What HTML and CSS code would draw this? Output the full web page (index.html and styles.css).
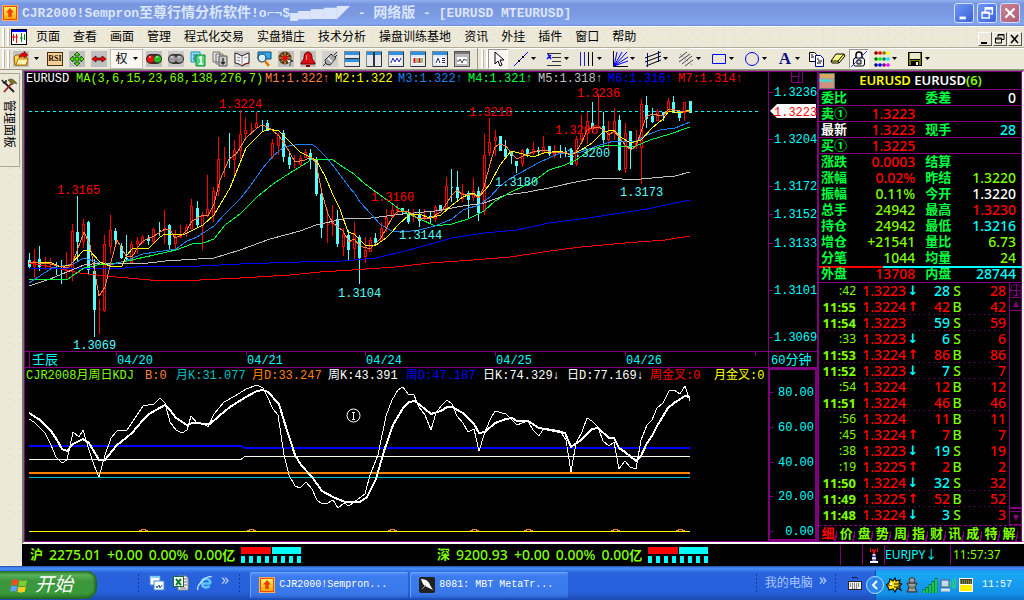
FILE: index.html
```html
<!DOCTYPE html>
<html lang="zh-CN">
<head>
<meta charset="utf-8">
<title>CJR2000!Sempron</title>
<link rel="stylesheet" href="styles.css">
</head>
<body>
<svg class="defs" aria-hidden="true">
  <defs>
    <linearGradient id="gold" x1="0" y1="0" x2="0" y2="1"><stop offset="0" stop-color="#fff36a"/><stop offset="1" stop-color="#f9a800"/></linearGradient>
    <symbol id="app" viewBox="0 0 16 16"><rect x=".5" y=".5" width="15" height="15" fill="#f04800" stroke="#ffb060"/><rect x="2" y="2" width="12" height="12" fill="url(#gold)"/><path d="M8 3l4 4.500h-2.200v4.500h-3.600v-4.500H4z" fill="#f04000"/></symbol>
    <symbol id="caret" viewBox="0 0 5 3"><path d="M0 0h5L2.500 3z" fill="#000"/></symbol>
    <symbol id="win" viewBox="0 0 16 16"><rect x=".5" y=".5" width="15" height="15" fill="#e4e8ec" stroke="#7a8790"/><path d="M1 1h14v3H1z" fill="#2f8fe0"/><path d="M15.500 1v14.500H1" fill="none" stroke="#333"/></symbol>
  </defs>
</svg>

<header class="titlebar">
  <svg class="i16" viewBox="0 0 16 16"><use href="#app"/></svg>
  <h1>CJR2000!Sempron<span class="han">至尊行情分析软件</span>!o⌐¬$▄▅▆▇◤ - <span class="han">网络版</span> - [EURUSD MTEURUSD]</h1>
  <div class="winbtns">
    <button aria-label="最小化"><svg viewBox="0 0 20 20"><path d="M5 14h7v3H5z" fill="#fff"/></svg></button>
    <button aria-label="还原"><svg viewBox="0 0 20 20"><path d="M8 9V4h8v7h-3M8 5.500h8M4.500 9h8v6.500h-8zM4 10h9" fill="none" stroke="#fff" stroke-width="1.500"/></svg></button>
    <button class="close" aria-label="关闭"><svg viewBox="0 0 20 20"><path d="M5 5l10 10M15 5L5 15" stroke="#fff" stroke-width="2.400"/></svg></button>
  </div>
</header>

<nav class="menubar">
  <span class="grip"></span>
  <svg class="i16" viewBox="0 0 16 16"><rect x=".5" y=".5" width="15" height="15" fill="#fff" stroke="#000"/><path d="M1 1h14v2H1z" fill="#00f"/><path d="M2.500 5v7M1 8h3M5.500 5v9M4 8h3" stroke="#f00"/><path d="M10.500 4v9M9 9h3M13.500 5v6" stroke="#080"/></svg>
  <button>页面</button><button>查看</button><button>画面</button><button>管理</button><button>程式化交易</button><button>实盘猎庄</button><button>技术分析</button><button>操盘训练基地</button><button>资讯</button><button>外挂</button><button>插件</button><button>窗口</button><button>帮助</button>
  <div class="mdibtns">
    <button aria-label="最小化窗口"><svg viewBox="0 0 12 12"><path d="M2 9h6v2H2z"/></svg></button>
    <button aria-label="还原窗口"><svg viewBox="0 0 12 12"><path d="M4 4V1.500h6v5H8M4 2h6M1.500 5h6v5h-6zM2 6h6" fill="none" stroke="#000"/></svg></button>
    <button aria-label="关闭窗口"><svg viewBox="0 0 12 12"><path d="M2 2l7 8M9 2l-7 8" stroke="#000" stroke-width="1.500"/></svg></button>
  </div>
</nav>

<div class="toolbar">
  <span class="grip"></span>
  <button class="dd first" aria-label="打开"><svg class="i16" viewBox="0 0 16 16"><path fill="#c0c0c0" d="M0 0h16v16H0z"/><path d="M1 6l2-2h4l1 2h6v8H2z" fill="#ffd75a" stroke="#9a6200"/><path d="M3 14l2-6h10l-2 6z" fill="#fff3b0" stroke="#b87800"/><path d="M6 7c0-4 3-5 5-5V0l4 4-4 3V5c-2 0-4 1-5 2" fill="#e00000" stroke="#700"  stroke-width=".5"/></svg><svg class="car"><use href="#caret"/></svg></button>
  <button class="tb rsi"><span>RSI</span></button>
  <button class="tb" aria-label="移动"><svg class="i16" viewBox="0 0 16 16"><path fill="#c0c0c0" d="M0 0h16v16H0z"/><path d="M8 1l3 3H9v3h3V5l3 3-3 3V9H9v3h2l-3 3-3-3h2V9H4v2L1 8l3-3v2h3V4H5z" fill="#58e000" stroke="#064006" stroke-width=".8"/></svg></button>
  <button class="tb" aria-label="水平移动"><svg class="i16" viewBox="0 0 16 16"><path fill="#c0c0c0" d="M0 0h16v16H0z"/><path d="M1 8l4-3v2h6V5l4 3-4 3V9H5v2z" fill="#f00" stroke="#500" stroke-width=".8"/></svg></button>
  <button class="quan">权<svg class="car"><use href="#caret"/></svg></button>
  <button class="tb" aria-label="信号"><svg class="i16" viewBox="0 0 16 16"><path fill="#c0c0c0" d="M0 0h16v16H0z"/><rect y="3" width="16" height="10" rx="5" fill="#402828"/><circle cx="4.500" cy="8" r="3.500" fill="#f01010"/><circle cx="11.500" cy="8" r="3.500" fill="#20c020"/><path d="M3 6h2M10 6h2" stroke="#fff"/></svg></button>
  <button class="tb" aria-label="信号关闭"><svg class="i16" viewBox="0 0 16 16"><path fill="#c8c8c8" d="M0 0h16v16H0z"/><rect y="3" width="16" height="10" rx="5" fill="#333"/><circle cx="4.500" cy="8" r="3.500" fill="#999"/><circle cx="11.500" cy="8" r="3.500" fill="#999"/><path d="M3 6h2M10 6h2" stroke="#fff"/></svg></button>
  <button class="tb" aria-label="分页"><svg class="i16" viewBox="0 0 16 16"><path d="M1 1h9v10H1z" fill="#8ee4f4" stroke="#1593c0"/><path d="M3 4h4v2H4v3h3" fill="none" stroke="#157"/><path d="M6 4h9v11H6z" fill="#50d878" stroke="#0c8838"/><path d="M9 7l2-1v7M9 13h4" fill="none" stroke="#fff" stroke-width="1.500"/></svg></button>
  <button class="tb" aria-label="下一页"><svg class="i16" viewBox="0 0 16 16"><path d="M1 1h7v10H1zM4 3h7v10H4z" fill="#ddd" stroke="#777"/><path d="M7 5h8v10H7z" fill="#c8c8c8" stroke="#555"/><path d="M11 7v6M9 11l2 2 2-2" fill="none" stroke="#222" stroke-width="1.300"/></svg></button>
  <button class="tb" aria-label="帮助手册"><svg class="i16" viewBox="0 0 16 16"><path fill="#c8c8c8" d="M0 0h16v16H0z"/><path d="M1 2l3 1 4 2 4-2 3-1v10l-4 1-3 2-3-2-4-1z" fill="#f4f4f4" stroke="#222"/><path d="M8 5v10M3 6l3 1M3 9l3 1M10 7l3-1" stroke="#888"/><path d="M8 15l3-2 4-1" stroke="#a00" fill="none"/></svg></button>
  <button class="tb" aria-label="查找"><svg class="i16" viewBox="0 0 16 16"><path d="M2 1h13v7H2z" fill="#36a9ee" stroke="#0b4b80"/><circle cx="6" cy="7" r="4" fill="#d5f2ff" stroke="#246" stroke-width="1.200"/><path d="M9 10l4 5" stroke="#e07000" stroke-width="2.500"/></svg></button>
  <button class="tb" aria-label="设置"><svg class="i16" viewBox="0 0 16 16"><path fill="#c0c0c0" d="M0 0h16v16H0z"/><circle cx="7" cy="7" r="6.500" fill="#5a3a18"/><path d="M7 1v12M1 7h12M3 3l8 8M11 3l-8 8" stroke="#d8a040"/><circle cx="7" cy="7" r="2.500" fill="#e00"/><path d="M9 8l6 2-3 1v4" fill="#fff" stroke="#333"/></svg></button>
  <button class="tb" aria-label="预警"><svg class="i16" viewBox="0 0 16 16"><path fill="#c0c0c0" d="M0 0h16v16H0z"/><path d="M8 1c4 0 4 5 4 7l3 4v1H1v-1l3-4c0-2 0-7 4-7z" fill="#e01010" stroke="#600"/><path d="M6 14h4v2H6z" fill="#800"/><path d="M6.500 4v5" stroke="#ff9090"/></svg></button>
  <button class="tb" aria-label="连接"><svg class="i16" viewBox="0 0 16 16"><path fill="#d0d0d0" d="M0 0h16v16H0z"/><path d="M1 15l3-3M12 4l3-3M13 6l2-2" stroke="#333"/><path d="M3 9l6-6 5 4-6 7-4-1z" fill="#aaa" stroke="#333"/><path d="M6 7l4 4" stroke="#fff" stroke-width="1.500"/></svg></button>
  <button class="tb" aria-label="横向排列"><svg class="i16" viewBox="0 0 16 16"><use href="#win"/><path d="M1 8h14v3H1z" fill="#2f8fe0"/><path d="M1 7.500h14" stroke="#333"/></svg></button>
  <button class="tb" aria-label="纵向排列"><svg class="i16" viewBox="0 0 16 16"><use href="#win"/><path d="M7 1h2v14H7z" fill="#333"/></svg></button>
  <button class="tb" aria-label="走势"><svg class="i16" viewBox="0 0 16 16"><use href="#win"/><path d="M3 6h10v7H3z" fill="#fff"/><path d="M3 12l2-5 2 4 2-4 2 4 2-4" fill="none" stroke="#22a"/></svg></button>
  <button class="tb" aria-label="K线"><svg class="i16" viewBox="0 0 16 16"><use href="#win"/><path d="M3 6h10v7H3z" fill="#fff"/><path d="M4.500 7v5M9.500 7v5" stroke="#e00" stroke-width="2"/><path d="M7 7v5M12 7v5" stroke="#080"/></svg></button>
  <button class="tb" aria-label="报表"><svg class="i16" viewBox="0 0 16 16"><use href="#win"/><path d="M3 6h10v7H3z" fill="#fff"/><path d="M4 12l2-5 2 5M10 7.500h3M10 9.500h3M10 11.500h3" fill="none" stroke="#226"/></svg></button>
  <button class="tb" aria-label="图形"><svg class="i16" viewBox="0 0 16 16"><rect x=".5" y=".5" width="15" height="15" fill="#bbb" stroke="#555"/><path d="M1 1h14v2H1z" fill="#777"/><path d="M3 6h10v7H3z" fill="#fff"/><path d="M3 10h2l1-2 2 4 2-4 1 1h2" fill="none" stroke="#444"/></svg></button>
  <span class="sep"></span><span class="grip"></span>
  <button class="press" aria-label="选择"><svg class="i16" viewBox="0 0 16 16"><path d="M5 1v12l3-3 2 5 2-1-2-5h4z" fill="#fff" stroke="#000"/></svg></button>
  <button class="dd" aria-label="直线"><svg class="i16" viewBox="0 0 16 16"><path d="M1 15L15 1" stroke="#00f"/><path d="M5 9h2v2H5zM9 5h2v2H9z" fill="#000"/></svg><svg class="car"><use href="#caret"/></svg></button>
  <button class="dd" aria-label="分割线"><svg class="i16" viewBox="0 0 16 16"><path d="M1 2.500h14M6 6.500h9M6 10.500h9M1 14.500h14" stroke="#333"/><path d="M2 3l3 5M1 8l4-4" stroke="#00f" stroke-width="1.500"/></svg><svg class="car"><use href="#caret"/></svg></button>
  <button class="dd" aria-label="周期线"><svg class="i16" viewBox="0 0 16 16"><path d="M1.500 1v14M5.500 1v14" stroke="#22c"/><path d="M9.500 1v14M13.500 1v14" stroke="#000"/></svg><svg class="car"><use href="#caret"/></svg></button>
  <button class="dd" aria-label="扇形线"><svg class="i16" viewBox="0 0 16 16"><path d="M1.500 0v15.500H16" stroke="#000" fill="none"/><path d="M2 15L5 1M2 15L10 1M2 15L15 1M2 15l14-9M2 15l14-5" stroke="#00f"/></svg><svg class="car"><use href="#caret"/></svg></button>
  <button class="dd" aria-label="通道线"><svg class="i16" viewBox="0 0 16 16"><path d="M2.500 2v14M13.500 0v11" stroke="#00a"/><path d="M0 7l16-6M0 11l16-6M1 15l15-6" stroke="#000"/></svg><svg class="car"><use href="#caret"/></svg></button>
  <button class="dd" aria-label="平行线"><svg class="i16" viewBox="0 0 16 16"><path d="M1 7l8-6M1 11L12 3M4 13l10-8M7 15l8-6" stroke="#444"/><path d="M2 3l12 11" stroke="#88b" stroke-dasharray="2 1"/></svg><svg class="car"><use href="#caret"/></svg></button>
  <button class="dd" aria-label="矩形"><svg class="i16" viewBox="0 0 16 16"><path d="M1.500 3.500h13v9h-13z" fill="none" stroke="#00f"/></svg><svg class="car"><use href="#caret"/></svg></button>
  <button class="dd" aria-label="圆形"><svg class="i16" viewBox="0 0 16 16"><circle cx="8" cy="8" r="6.500" fill="none" stroke="#00f"/></svg><svg class="car"><use href="#caret"/></svg></button>
  <button class="dd letter"><span>A</span><svg class="car"><use href="#caret"/></svg></button>
  <button class="tb" aria-label="复制"><svg class="i16" viewBox="0 0 16 16"><path d="M1.500 1.500h5l2 2v7h-7z" fill="#fff" stroke="#000"/><path d="M7.500 4.500h5l3 3v8h-8z" fill="#fff" stroke="#008"/><path d="M3 4h2M3 6h3M9 8h2M10 10h4M9 12h4" stroke="#000"/></svg></button>
  <button class="tb" aria-label="橡皮"><svg class="i16" viewBox="0 0 16 16"><path d="M6 3h8l1 2-6 7H2l-1-2z" fill="#ffff80" stroke="#000"/><path d="M1 10h7l1 2M8 10l6-7" fill="none" stroke="#000"/></svg></button>
  <button class="press" aria-label="锁定"><svg class="i16" viewBox="0 0 16 16"><path d="M5 7V4c0-4 6-4 6 0v3" fill="none" stroke="#000" stroke-width="1.500"/><rect x="2.500" y="7" width="11" height="8" rx="2" fill="#fff" stroke="#000"/><path d="M6 9h4v4H6z" fill="#ccc" stroke="#000"/><path d="M0 16L16 0" stroke="#33c"/></svg></button>
  <button class="dd" aria-label="颜色"><svg class="i16" viewBox="0 0 16 16"><g stroke-width="3.600" stroke-linecap="round"><path d="M2 2h.1" stroke="#800000"/><path d="M6 2h.1" stroke="#f00"/><path d="M10 2h.1" stroke="#808000"/><path d="M14 2h.1" stroke="#ff0"/><path d="M2 8h.1" stroke="#008000"/><path d="M6 8h.1" stroke="#0e0"/><path d="M10 8h.1" stroke="#008080"/><path d="M14 8h.1" stroke="#0ee"/><path d="M2 14h.1" stroke="#000080"/><path d="M6 14h.1" stroke="#00f"/><path d="M10 14h.1" stroke="#800080"/><path d="M14 14h.1" stroke="#f0f"/></g></svg><svg class="car"><use href="#caret"/></svg></button>
  <button class="dd" aria-label="保存"><svg class="i16" viewBox="0 0 16 16"><path d="M1 1h14v14H1z" fill="#000"/><path d="M3 2h10v6H3z" fill="#e8e8d0"/><path d="M2 2v12h2v-4h8v4h2V2h-1v7H3V2z" fill="#808000"/><path d="M9 11h2v3H9z" fill="#fff"/></svg><svg class="car"><use href="#caret"/></svg></button>
</div>

<main class="main">
  <aside class="side"><button class="sidetab"><svg class="i16" viewBox="0 0 16 16"><path d="M3 4l10 10" stroke="#222" stroke-width="1.800"/><path d="M1 2l2 3 2-1V2" fill="none" stroke="#222" stroke-width="1.500"/><path d="M11 5L3 14" stroke="#a02020" stroke-width="1.800"/><path d="M7 2c3-2 6-1 9 4l-3-1-2 2-2-3z" fill="#7a7418" stroke="#333" stroke-width=".5"/></svg><span>管理面板</span></button></aside>
  <div class="desk">
    <div class="work">
      <section class="charts">
        <div class="legend ma"><span class="c-w">EURUSD</span><span class="c-lime">MA(3,6,15,23,68,138,276,7)</span><span class="c-or">M1:1.322↑</span><span class="c-y">M2:1.322</span><span class="c-bl">M3:1.322↑</span><span class="c-g">M4:1.321↑</span><span class="c-gr">M5:1.318↑</span><span class="c-db">M6:1.316↑</span><span class="c-r">M7:1.314↑</span></div>
        <div class="corner"><svg viewBox="0 0 14 12"><path d="M1.500 0v10.500h11V0M1 4.500h8V0M8.500 4v7" fill="none" stroke="#800080"/></svg></div>
        <svg class="plot" viewBox="25 87 743 264" preserveAspectRatio="xMinYMin meet">
          <path class="dash" d="M29 111.500H759"/>
          <g id="candles"></g>
          <g class="lines">
            <path stroke="#f00" d="M29 263L51 267 80 273 105 276 150 280 200 280 240 278 290 275 320 272 352 270 395 267 430 263 473 260 510 257 550 251 581 247 625 243 665 240 690 236"/>
            <path stroke="#00f" d="M29 268H125L146 266 200 266 240 264 300 262 343 261 376 258 409 250 452 238 484 233 517 230 549 223 581 219 614 214 647 209 675 203 690 200"/>
            <path stroke="#c0c0c0" d="M29 286L50 279 84 265 100 263 140 264 165 261 214 258 240 250 270 239 300 231 316 225 343 219 371 218 403 214 435 211 463 206 484 203 506 195 528 192 549 188 571 183 592 179 614 178 630 180 652 178 675 176 690 172"/>
            <path stroke="#00ff40" d="M29 280L68 279 75 274 84 268 97 265 110 264 127 261 154 255 176 250 192 244 203 243 214 239 225 225 240 214 257 197 273 184 290 173 311 160 322 159 333 160 343 167 354 174 365 184 376 192 387 200 398 208 409 214 420 219 435 226 452 224 468 219 484 211 495 201 511 192 533 182 549 170 565 165 576 160 592 149 603 146 614 145 625 147 636 146 650 140 670 134 690 127"/>
            <path stroke="#1e80f0" d="M29 283L52 268 73 264 84 258 97 262 110 265 125 261 143 254 176 249 187 241 197 237 214 226 225 214 240 199 251 185 262 169 273 156 284 147 300 144 311 144 316 147 327 158 338 172 349 187 355 194 360 202 371 214 381 225 392 231 403 232 419 230 435 226 452 219 463 210 479 205 490 197 500 186 511 178 520 173 540 162 560 153 571 153 581 152 600 145 614 141 625 142 636 141 647 135 660 130 675 128 690 122"/>
            <path stroke="#ff0" d="M29 262L52 263 60 267 70 265 84 250 90 251 100 262 110 266 122 266 127 255 133 248 149 248 160 237 165 234 185 234 203 225 214 215 230 188 246 148 262 132 268 129 279 131 300 152 316 160 325 176 333 195 340 209 348 232 354 234 360 240 365 245 376 245 386 238 392 232 398 225 409 215 419 214 430 218 441 215 452 205 463 197 473 193 479 197 490 184 500 165 511 151 523 154 533 157 544 153 560 151 571 155 581 150 592 143 603 132 614 130 620 137 631 143 641 140 652 128 663 119 669 111 679 113 690 110"/>
            <path stroke="#ff8040" d="M29 262L50 264 68 268 73 262 84 232 90 245 99 296 105 287 111 262 117 240 126 256 132 257 138 247 143 241 154 236 165 229 170 230 175 238 182 235 187 230 192 221 203 215 208 216 214 204 220 180 229 159 236 154 240 148 246 138 257 128 262 125 268 127 278 135 285 144 295 162 305 160 311 157 316 163 322 193 328 214 333 223 343 231 349 242 354 239 360 246 370 249 381 238 392 218 398 211 409 212 419 219 430 218 441 212 452 195 457 190 463 195 473 194 479 198 484 187 490 164 495 147 500 144 506 146 511 153 517 159 523 156 533 152 544 150 555 153 565 152 571 155 576 152 582 142 587 130 592 128 598 127 603 129 609 135 614 131 620 138 625 145 631 150 636 146 641 132 646 117 652 114 663 116 669 109 680 111 690 111"/>
          </g>
          <g class="num" fill="#f00"><text x="57" y="194">1.3165</text><text x="219" y="108">1.3224</text><text x="371" y="201">1.3160</text><text x="469" y="116">1.3218</text><text x="577" y="97">1.3236</text><text x="555" y="134">1.3206</text></g>
          <g class="num" fill="#5ff"><text x="73" y="349">1.3069</text><text x="338" y="297">1.3104</text><text x="399" y="239">1.3144</text><text x="495" y="186">1.3180</text><text x="567" y="157">1.3200</text><text x="620" y="196">1.3173</text></g>
        </svg>
        <svg class="axis" viewBox="769 87 48 264" preserveAspectRatio="xMinYMin meet">
          <path d="M769 92.500h4M769 139.500h4M769 186.500h4M769 214.500h4M769 243.500h4M769 290.500h4M769 337.500h4" stroke="#800080"/>
          <g class="num" fill="#0ff"><text x="774" y="96">1.3236</text><text x="774" y="143">1.3204</text><text x="774" y="190">1.3172</text><text x="774" y="218">1.3152</text><text x="774" y="247">1.3133</text><text x="774" y="294">1.3101</text><text x="774" y="341">1.3069</text></g>
          <path d="M770 111l7-7h39v14h-39z" fill="#fff"/><text class="num" x="774" y="116" fill="#f00">1.3223</text>
        </svg>
        <svg class="dates" viewBox="25 352 743 15" preserveAspectRatio="xMinYMin meet">
          <path d="M29.500 352v15M116.500 352v4M246.500 352v4M273.500 352v4M365.500 352v4M495.500 352v4M625.500 352v4M755.500 352v4" stroke="#800080"/>
          <g class="num" fill="#0ff"><text class="han13" x="32" y="364">壬辰</text><text x="117" y="364">04/20</text><text x="247" y="364">04/21</text><text x="366" y="364">04/24</text><text x="496" y="364">04/25</text><text x="626" y="364">04/26</text></g>
        </svg>
        <div class="period">60<span>分钟</span></div>
        <div class="legend kdj"><span class="c-lime">CJR2008月周日KDJ</span><span class="c-or">B:0</span><span class="c-te">月K:31.077</span><span class="c-o2">月D:33.247</span><span class="c-w">周K:43.391</span><span class="c-db">周D:47.187</span><span class="c-w">日K:74.329↓</span><span class="c-w">日D:77.169↓</span><span class="c-r">周金叉:0</span><span class="c-y">月金叉:0</span></div>
        <svg class="plot2" viewBox="25 384 743 157" preserveAspectRatio="xMinYMin meet">
          <g fill="none">
            <path d="M29 446H241L245 448H690" stroke="#00f" stroke-width="2"/>
            <path d="M29 459.500H241L245 456.500H690" stroke="#f0ffe8"/>
            <path d="M29 473H690" stroke="#ff8000" stroke-width="2"/>
            <path d="M29 477.500H690" stroke="#00c0c0"/>
            <path d="M29 531.500H690" stroke="#ff0"/>
            <path d="M139 530.500h2l1-1h3l1 1h2M247 530.500h2l1-1h3l1 1h2M388 530.500h2l1-1h3l1 1h2M470 530.500h2l1-1h3l1 1h2M524 530.500h2l1-1h3l1 1h2M611 530.500h2l1-1h3l1 1h2M676 530.500h2l1-1h3l1 1h2" stroke="#ff8040"/>
            <path d="M29 419L34 422 45 433 51 445 56 457 62 463 67 460 73 432 79 437 83 430 89 450 94 465 99 477 105 455 111 438 117 431 127 430 143 406 154 404 160 398 165 403 170 422 176 430 182 433 187 430 191 416 197 423 203 423 208 427 214 414 224 402 235 396 246 389 257 385 263 388 268 398 273 409 278 415 284 455 289 475 295 486 300 488 306 482 312 489 317 500 322 504 328 503 333 500 338 508 344 503 349 506 365 494 370 475 378 455 386 416 392 400 398 390 403 387 408 394 414 395 419 407 425 415 431 430 436 413 441 406 447 400 452 404 457 416 463 423 468 432 474 429 479 451 485 432 490 420 495 411 506 414 517 425 522 423 528 421 533 430 539 436 544 428 560 431 566 440 571 472 576 443 582 432 587 418 592 421 598 427 603 441 609 446 614 442 619 469 625 461 630 467 636 469 641 440 647 425 652 420 657 408 663 403 669 391 674 390 680 394 685 386 690 401" stroke="#fff"/>
            <path d="M29 413L40 420 51 431 57 440 62 449 67 451 73 444 83 439 89 443 99 460 105 460 116 446 132 433 143 420 149 414 165 405 170 410 176 418 187 425 192 423 210 424 219 416 230 407 246 397 257 391 263 390 268 392 279 404 285 424 295 455 301 465 312 477 322 491 333 497 345 502 360 502 367 497 376 479 384 451 393 425 403 408 409 402 415 401 425 409 431 414 441 411 447 407 452 407 463 413 474 424 479 433 485 432 495 423 506 419 512 418 517 421 528 421 539 428 555 431 565 433 571 447 581 440 592 429 598 428 609 438 614 438 619 448 625 452 636 461 641 456 647 443 652 436 657 426 668 408 674 403 685 396 690 397" stroke="#fff" stroke-width="2"/>
            <circle cx="353.500" cy="415.500" r="6.500" stroke="#fff"/><path d="M353.500 412v7M352 412.500h3M352 419.500h3" stroke="#fff"/>
          </g>
        </svg>
        <svg class="axis2" viewBox="771 370 44 169" preserveAspectRatio="xMinYMin meet">
          <path d="M771 392.500h3M771 427.500h3M771 462.500h3M771 496.500h3M771 531.500h3" stroke="#800080"/>
          <g class="num" fill="#0ff" text-anchor="end"><text x="815" y="396">80.00</text><text x="815" y="431">60.00</text><text x="815" y="466">40.00</text><text x="815" y="500">20.00</text><text x="815" y="535">0.00</text></g>
        </svg>
      </section>

      <section class="quote">
        <div class="qhead"><svg class="i16" viewBox="0 0 16 16"><path fill="#d09080" stroke="#5a7a70" stroke-width="2" d="M0 0h16v16H0z"/><path d="M1 1h14v4H1z" fill="#d8a860"/><path d="M1 9V6l3 3V6M8 6H6v3h2M6 7.500h2M10 6v3l1.500-1.500L13 9V6" stroke="#0ff" fill="none"/></svg><h2><span class="c-y">EURUSD</span> EURUSD<span class="c-lime">(6)</span></h2></div>
        <table class="qt">
          <tr class="ln"><th>委比</th><td></td><th>委差</th><td class="c-w">0</td></tr>
          <tr class="ln"><th>卖①</th><td class="c-r">1.3223</td><th></th><td></td></tr>
          <tr class="ln"><th class="c-w">最新</th><td class="c-r">1.3223</td><th>现手</th><td class="c-cy">28</td></tr>
          <tr class="ln"><th>买①</th><td class="c-r">1.3225</td><th></th><td></td></tr>
          <tr><th>涨跌</th><td class="c-r">0.0003</td><th>结算</th><td></td></tr>
          <tr><th>涨幅</th><td class="c-r">0.02%</td><th>昨结</th><td>1.3220</td></tr>
          <tr><th>振幅</th><td>0.11%</td><th>今开</th><td class="c-w">1.3220</td></tr>
          <tr><th>总手</th><td>24942</td><th>最高</th><td class="c-r">1.3230</td></tr>
          <tr><th>持仓</th><td>24942</td><th>最低</th><td class="c-cy">1.3216</td></tr>
          <tr><th>增仓</th><td>+21541</td><th>量比</th><td>6.73</td></tr>
          <tr><th>分笔</th><td>1044</td><th>均量</th><td>24</td></tr>
          <tr class="ratio"><th>外盘</th><td class="c-r">13708</td><th>内盘</th><td class="c-cy">28744</td></tr>
        </table>
        <div class="ticks">
          <table class="tt">
            <tr><th>:42</th><td>1.3223</td><td class="c-cy">↓</td><td class="c-cy">28</td><td>S</td><td>28</td></tr>
            <tr class="m"><th>11:55</th><td>1.3224</td><td>↑</td><td>42</td><td>B</td><td>42</td></tr>
            <tr class="m"><th>11:54</th><td>1.3223</td><td></td><td class="c-cy">59</td><td>S</td><td>59</td></tr>
            <tr><th>:33</th><td>1.3223</td><td class="c-cy">↓</td><td class="c-cy">6</td><td>S</td><td>6</td></tr>
            <tr class="m"><th>11:53</th><td>1.3224</td><td>↑</td><td>86</td><td>B</td><td>86</td></tr>
            <tr class="m"><th>11:52</th><td>1.3223</td><td class="c-cy">↓</td><td class="c-cy">7</td><td>S</td><td>7</td></tr>
            <tr><th>:54</th><td>1.3224</td><td></td><td>12</td><td>B</td><td>12</td></tr>
            <tr class="m"><th>11:51</th><td>1.3224</td><td></td><td>46</td><td>B</td><td>46</td></tr>
            <tr><th>:56</th><td>1.3224</td><td></td><td>11</td><td>B</td><td>11</td></tr>
            <tr><th>:45</th><td>1.3224</td><td>↑</td><td>7</td><td>B</td><td>7</td></tr>
            <tr><th>:38</th><td>1.3223</td><td class="c-cy">↓</td><td class="c-cy">19</td><td>S</td><td>19</td></tr>
            <tr><th>:19</th><td>1.3225</td><td>↑</td><td>2</td><td>B</td><td>2</td></tr>
            <tr class="m"><th>11:50</th><td>1.3224</td><td class="c-cy">↓</td><td class="c-cy">32</td><td>S</td><td>32</td></tr>
            <tr class="m"><th>11:49</th><td>1.3225</td><td>↑</td><td>52</td><td>B</td><td>52</td></tr>
            <tr class="m"><th>11:48</th><td>1.3224</td><td class="c-cy">↓</td><td class="c-cy">3</td><td>S</td><td>3</td></tr>
          </table>
          <div class="scroll">
            <svg viewBox="0 0 12 14"><circle cx="6" cy="7" r="5.500" fill="none" stroke="#800080"/><path d="M0 7.500h12M6.500 1v12" stroke="#800080"/></svg>
            <button aria-label="向上"><svg viewBox="0 0 12 12"><path d="M6 3l3 6H3z" fill="#800080"/></svg></button>
            <span class="track"></span>
            <button aria-label="向下"><svg viewBox="0 0 12 12"><path d="M3 3h6L6 9z" fill="#800080"/></svg></button>
          </div>
        </div>
        <div class="tabs"><button class="on">细</button><button>价</button><button>盘</button><button>势</button><button>周</button><button>指</button><button>财</button><button>讯</button><button>成</button><button>特</button><button>解</button></div>
      </section>
    </div>

    <footer class="status">
      <div class="idx"><b>沪</b><span>2275.01</span><span>+0.00</span><span>0.00%</span><span>0.00<b>亿</b></span><span class="gauge"></span></div>
      <div class="idx"><b>深</b><span>9200.93</span><span>+0.00</span><span>0.00%</span><span>0.00<b>亿</b></span><span class="gauge"></span></div>
      <div class="cell empty"></div>
      <div class="cell ant"><svg viewBox="0 0 10 16"><path d="M1.500 1v4M8.500 1v4M3.500 2v2M6.500 2v2" stroke="#f00"/><path d="M5 3v4" stroke="#f00" stroke-width="2"/><path d="M5 7v8" stroke="#ccf" stroke-width="3"/><path d="M1 15h8M3 11.500h4" stroke="#fff" stroke-width="2"/><path d="M3 9.500h4M2 13h6" stroke="#22a"/></svg></div>
      <div class="cell pair">EURJPY↓</div>
      <div class="cell clock">11:57:37</div>
    </footer>
  </div>
</main>

<footer class="taskbar">
  <button class="start"><svg viewBox="0 0 18 18"><path d="M2 4c2-2 4-1 6 0L7 9C5 8 3 8 1 9z" fill="#f05020"/><path d="M9 4c2 1 4 1 7 0l-1 5c-3 1-5 1-7 0z" fill="#80d030"/><path d="M1 10c2-1 4-1 6 0l-1 5c-2-1-4-1-6 0z" fill="#60a0ff"/><path d="M8 10c2 1 4 1 7 0l-1 5c-3 1-5 1-7 0z" fill="#ffd020"/></svg><span>开始</span></button>
  <div class="quick">
    <i class="dots"></i>
    <svg viewBox="0 0 16 16"><rect x="1" y="1" width="10" height="9" fill="#fff" stroke="#48c"/><path d="M1 1h10v2H1z" fill="#8cf"/><rect x="5" y="6" width="10" height="9" fill="#fff" stroke="#48c"/><path d="M7 11l1 2 2-3 1 3 2-3" fill="none" stroke="#258"/></svg>
    <svg viewBox="0 0 16 16"><path d="M5 1h8l2 2v12H5z" fill="#eee" stroke="#888"/><path d="M11 4h3M11 7h3M11 10h3M7 13h6" stroke="#777"/><rect x=".500" y="1.500" width="10" height="10" fill="#fff" stroke="#176b2c"/><path d="M3 4l5 6M8 4l-5 6" stroke="#177a2c" stroke-width="2"/></svg>
    <svg viewBox="0 0 16 16"><path d="M13.500 8.500H5c0 4 5 5 7.500 2.500" fill="none" stroke="#5cc4ff" stroke-width="2.600"/><path d="M4.500 8c1-6 9-5 9 .5" fill="none" stroke="#5cc4ff" stroke-width="2.600"/><path d="M1 15c-2-4 8-15 14-13" fill="none" stroke="#bfe6ff" stroke-width="1.300"/></svg>
    <span class="more">»</span>
    <i class="dots"></i>
  </div>
  <button class="task"><svg class="i16" viewBox="0 0 16 16"><use href="#app"/></svg>CJR2000!Sempron...</button>
  <button class="task"><svg class="i16" viewBox="0 0 16 16"><rect width="16" height="16" rx="2" fill="#222"/><path d="M2 2c4 0 8 2 9 6l3 5-6-3C5 9 3 6 2 2z" fill="#fff"/><path d="M3 12l4-4" stroke="#999"/></svg>8081: MBT MetaTr...</button>
  <div class="desktop"><i class="dots"></i><span>我的电脑</span><span class="more">»</span><i class="dots"></i><svg viewBox="0 0 14 14"><path d="M4 1l2 1 2-1 2 2" stroke="#112" fill="none"/><rect x=".500" y="5.500" width="13" height="8" fill="#eee" stroke="#222"/><path d="M2 8h10M2 10h10M4 12h6" stroke="#222" stroke-dasharray="1 1"/></svg></div>
  <div class="tray">
    <button class="chev" aria-label="显示图标"><svg viewBox="0 0 16 16"><path d="M10 4L6 8l4 4" fill="none" stroke="#fff" stroke-width="2"/></svg></button>
    <svg viewBox="0 0 16 16"><path d="M0 8l3-2 1-4 3 2 2-3 1 3 4-1-1 3 3 1-3 2 2 4-4-2-2 4-2-3-4 1-1-3z" fill="#ffe010" stroke="#111" stroke-width="1.200"/><path d="M1 8h5M8 7h6M8 10h5" stroke="#111"/><circle cx="5" cy="7" r="1.300" fill="#fff"/></svg>
    <svg viewBox="0 0 16 16"><circle cx="8" cy="3.500" r="3" fill="#999" stroke="#333"/><path d="M3 6h10l-2 4 2 5H3l2-5z" fill="#777" stroke="#333"/><path d="M5 8h6M5 13h6" stroke="#ccc"/></svg>
    <svg viewBox="0 0 16 16"><path d="M2 12v4M5 10v6M8 7v9M11 4v12M14 1v15" stroke="#063" stroke-width="2.600"/><path d="M2 13v3M5 11v5M8 8v8M11 5v11M14 2v14" stroke="#2e4" stroke-width="1.400"/></svg>
    <svg viewBox="0 0 16 16"><rect x="1" y="3" width="8" height="7" fill="#bde" stroke="#557"/><path d="M1 13h9" stroke="#ddd" stroke-width="3"/><path d="M10 5c1 2 1 3 0 5M12 3c2 3 2 5 0 8M14 1c3 4 2 8 0 11" fill="none" stroke="#4e3"/></svg>
    <svg viewBox="0 0 16 16"><path d="M1 1h14v14H1z" fill="#fff"/><path d="M2 2h12v5H2z" fill="#442"/><path d="M2 8h12v6H2z" fill="#fe0"/><path d="M2 4h12M2 6h12" stroke="#bb7" stroke-dasharray="1 1"/></svg>
    <time>11:57</time>
  </div>
</footer>
<script src="chart.js"></script>
</body>
</html>
```

FILE: styles.css
```css
* { box-sizing: border-box; }
:root {
  --line: #800080;
  --beige: #ece9d8;
  --mono: "Liberation Mono", "Noto Sans CJK SC", monospace;
  --sans: "Noto Sans", "Noto Sans CJK SC", sans-serif;
  --han: "Liberation Sans", "Noto Sans CJK SC", sans-serif;
}
body { margin: 0; min-height: 100vh; display: flex; flex-direction: column; font: 12px/16px var(--han); background: var(--beige); }
button { border: 0; margin: 0; padding: 0; background: none; font: inherit; color: inherit; }
svg { display: block; flex: none; }
.defs { position: absolute; width: 0; height: 0; }
.i16 { width: 16px; height: 16px; }

.titlebar { display: flex; align-items: center; height: 26px; padding: 0 4px 0 2px; background: linear-gradient(#8fb0f0 0, #7896e0 4px, #7b99e1 13px, #80a0ea 20px, #86a6ee 24px, #6d8cd8 26px); }
.titlebar h1 { flex: 1; margin: 0 0 0 4px; font: bold 13px/24px var(--mono); color: #dbe5fb; white-space: pre; overflow: hidden; }
.han { font: bold 14px/24px var(--han); }
.winbtns { display: flex; gap: 3px; }
.winbtns button { width: 20px; height: 20px; border: 1px solid #d4e0ff; border-radius: 3px; background: linear-gradient(135deg, #6e96f4, #3a62dc); }
.winbtns .close { background: linear-gradient(135deg, #c88090, #b06078); }
.winbtns svg { width: 18px; height: 18px; }

.menubar, .side { background: radial-gradient(circle, #f8ddb0 1px, transparent 1px) 0 0 / 9px 8px, radial-gradient(circle, #dfe0dc 1px, transparent 1px) 4px 4px / 11px 7px, var(--beige); }
.menubar { display: flex; align-items: center; gap: 13px; height: 21px; padding: 0 2px 0 2px; border-top: 1px solid #fff; }
.menubar > .grip { margin-right: -11px; }
.menubar > .i16 { margin-right: -4px; }
.menubar > button { flex: none; color: #000; }
.grip { flex: none; width: 7px; height: 18px; border-left: 2px solid #fff; border-right: 2px solid #fff; box-shadow: 1px 0 0 #b8b5a4; background: linear-gradient(to right, #b8b5a4 1px, transparent 1px); }
.mdibtns { display: flex; gap: 1px; margin: 4px 0 0 auto; }
.mdibtns button { width: 14px; height: 14px; background: var(--beige); border: 1px solid; border-color: #fff #555 #555 #fff; }
.mdibtns svg { width: 12px; height: 12px; }

.toolbar { display: flex; align-items: center; height: 23px; padding-left: 2px; background: linear-gradient(to right, #e9e6d8 760px, var(--beige) 0); border-top: 1px solid #b0ad9c; box-shadow: inset 0 1px #fff; border-bottom: 1px solid #99968a; }
.tb, .dd, .press, .quan { flex: none; display: flex; align-items: center; height: 20px; }
.tb { width: 22px; justify-content: center; }
.dd { width: 33px; padding-left: 5px; gap: 2px; }
.dd.first { width: 35px; padding-left: 4px; gap: 5px; }
.car { width: 5px; height: 3px; }
.press { width: 20px; justify-content: center; background: #f8f7f2; border: 1px solid; border-color: #99968a #fff #fff #99968a; }
.quan { width: 33px; justify-content: center; gap: 5px; background: #f8f7f2; border: 1px solid #c4c1b2; }
.rsi span { width: 16px; height: 14px; border: 1px solid #4a3010; background: #f6cf98; color: #201000; font: bold 8px/12px "Liberation Serif", serif; }
.letter span { width: 16px; text-align: center; font: bold 17px/18px "Liberation Serif", serif; color: #101080; }
.sep { flex: none; width: 5px; height: 22px; border-right: 1px solid #99968a; margin-right: 3px; }

.main { flex: 1; display: flex; min-height: 0; }
.side { flex: none; width: 22px; padding-top: 3px; }
.sidetab { display: flex; flex-direction: column; align-items: center; gap: 6px; width: 20px; height: 94px; padding: 4px 2px 0 0; border: 1px solid #aaa69a; border-left: 0; color: #000; }
.sidetab span { writing-mode: vertical-rl; text-orientation: sideways; line-height: 16px; }
.desk { flex: 1; min-width: 0; display: flex; flex-direction: column; background: #000; }
.work { flex: 1; display: flex; border: solid #77746c; border-width: 1px 0 0 2px; border-bottom: 2px solid #fff; }

.charts { flex: 1; min-width: 0; display: grid; grid-template-columns: minmax(0, 1fr) 49px; grid-template-rows: 15px auto 17px 16px 1fr; background: #000; border: 1px solid var(--line); border-right: 0; }
.charts > svg { width: 100%; }
.legend { display: grid; align-items: center; padding-left: 1px; font: 12px/15px var(--mono); white-space: pre; }
.ma { grid-template-columns: 50px 189px 70px 63px 70px 70px 70px 70px 1fr; }
.kdj { grid-template-columns: 119px 31px 76px 76px 78px 77px 84px 83px 64px 1fr; grid-row: 4; }
.corner, .charts > .axis { border-left: 1px solid var(--line); }
.corner svg { width: 14px; height: 12px; margin-left: 21px; }
.plot, .axis { height: 264px; }
.dates, .period { border: solid var(--line); border-width: 1px 0; height: 17px; }
.period { border-left-width: 1px; color: #0ff; font: 12px/15px var(--mono); white-space: nowrap; padding-left: 2px; }
.period span { font-family: var(--han); font-size: 13px; }
.plot2 { grid-row: 5; height: 157px; }
.charts > .axis2 { grid-column: 2; grid-row: 4 / 6; height: 173px; border: 2px solid var(--line); }
.num { font: 12px var(--mono); }
.han13 { font: 13px var(--han); }
.lines path { fill: none; shape-rendering: crispEdges; }
.dash { stroke: #0ff; stroke-dasharray: 3 3; shape-rendering: crispEdges; }
.plot2 path { shape-rendering: crispEdges; }
.candle { shape-rendering: crispEdges; }
.up { stroke: #f00; fill: #000; }
.down { stroke: #5ff; fill: #5ff; }

.c-w { color: #fff !important; } .c-lime { color: #80ff00; } .c-or { color: #ff8040; } .c-y { color: #ff0; }
.c-bl { color: #1e80f0; } .c-g { color: #00ff40; } .c-gr { color: #c0c0c0; } .c-db { color: #00f; }
.c-r { color: #f00 !important; } .c-te { color: #00c0c0; } .c-o2 { color: #ff8000; } .c-cy { color: #0ff !important; }

.quote { flex: none; width: 207px; display: flex; flex-direction: column; border: 1px solid var(--line); border-left-width: 2px; border-right: 2px solid #f4f2ea; box-shadow: inset -1px 0 var(--line); font: 500 14px/16px var(--sans); }
.qhead { display: flex; align-items: center; height: 18px; border-bottom: 1px solid var(--line); }
.qhead h2 { flex: 1; margin: 0; padding-right: 16px; text-align: center; font: 600 13px/17px var(--sans); color: #fff; }
table { border-collapse: collapse; table-layout: fixed; }
.qt { width: 203px; color: #80ff00; border-bottom: 1px solid var(--line); }
.qt tr, .tt tr { height: 16px; }
th, td { padding: 0; line-height: 16px; height: 16px; text-align: right; white-space: nowrap; }
.qt th { width: 29px; padding-left: 2px; text-align: left; font: bold 13px/16px var(--han); color: #00ff40; }
.qt td { width: 63px; }
.qt th:nth-child(3) { width: 39px; padding-left: 10px; }
.qt td:nth-child(4) { padding-right: 6px; }
.qt .ln { background: linear-gradient(var(--line), var(--line)) bottom / 100% 1px no-repeat; }
.qt .ratio { background: linear-gradient(to right, #f00 64px, #0ff 65px) top / 100% 2px no-repeat; }
.ticks { display: flex; flex: 1; }
.tt { width: 190px; align-self: flex-start; color: #f00; }
.tt th { width: 37px; font-weight: 400; font-size: 12px; color: #80ff00; }
.tt td:nth-child(2) { width: 50px; }
.tt td:nth-child(3) { width: 14px; text-align: center; font: bold 13px/16px "DejaVu Sans", sans-serif; }
.tt td:nth-child(4) { width: 30px; }
.tt td:nth-child(5) { width: 14px; color: #80ff00; text-align: center; font-size: 14px; }
.tt td:nth-child(6) { padding-right: 3px; }
.m { background: repeating-linear-gradient(to right, var(--line) 0 1px, transparent 1px 5px) bottom / 100% 1px no-repeat; }
.m:last-child { background: none; }
.tt .m th { font-weight: 700; font-size: 13px; }
.scroll { flex: 1; display: flex; flex-direction: column; border-left: 1px solid var(--line); }
.scroll > svg { width: 12px; height: 14px; }
.scroll button { height: 14px; border: solid var(--line); border-width: 1px 0; }
.scroll button svg { width: 12px; height: 12px; }
.track { flex: 1; border-bottom: 2px solid var(--line); margin-bottom: 2px; }
.tabs { display: flex; height: 16px; border-top: 1px dashed var(--line); padding-right: 4px; }
.tabs button { flex: 1; font: bold 13px/15px var(--han); color: #80ff00; background: linear-gradient(105deg, transparent 86%, var(--line) 86%, var(--line) 94%, transparent 94%); }
.tabs .on { color: #f00; }

.status { display: flex; align-items: center; height: 22px; color: #80ff00; font: 500 14px/18px var(--sans); white-space: nowrap; }
.idx { flex: 0 1 407px; display: flex; align-items: center; gap: 6px; padding-left: 8px; }
.idx b { font: bold 13px/18px var(--han); }
.gauge { width: 60px; height: 16px; background: linear-gradient(to right, #f00 30px, #000 30px 31px, #0ff 31px) top / 100% 7px no-repeat, repeating-linear-gradient(to right, #0ff 0 4px, #000 4px 8px) bottom / 100% 7px no-repeat; }
.cell { height: 20px; border-left: 1px solid var(--line); display: flex; align-items: center; font: 12px/18px var(--sans); }
.empty { width: 22px; margin-left: auto; }
.ant { width: 22px; justify-content: center; }
.ant svg { width: 10px; height: 16px; }
.pair { width: 66px; color: #0ff; }
.clock { width: 74px; padding-left: 2px; }

.taskbar { display: flex; align-items: center; height: 34px; font: 12px/18px var(--han); color: #fff; background: linear-gradient(#1a48a8 0, #4a90f4 2px, #3a7ef0 4px, #2a62dc 7px, #2660dc 26px, #1c4cb4 34px); }
.start { display: flex; align-items: center; gap: 6px; width: 97px; height: 28px; margin-top: 4px; padding-left: 10px; border-radius: 0 10px 12px 0; background: linear-gradient(#2a7a2a, #58b058 4px, #3c963c 10px, #3a9a3a 22px, #256e25); box-shadow: inset -2px 0 3px #1c5c1c; color: #fff; font: italic 19px/26px var(--han); }
.start svg { width: 19px; height: 19px; }
.quick { display: flex; align-items: center; gap: 8px; margin-left: 39px; }
.quick svg { width: 16px; height: 16px; }
.more { font: 16px/12px var(--sans); color: #b8d0ff; align-self: flex-start; }
.dots { width: 5px; height: 20px; background: radial-gradient(circle, #123a94 1px, transparent 1px) 0 0 / 5px 4px; }
.task { display: flex; align-items: center; gap: 4px; flex: 0 1 158px; height: 26px; margin: 4px 0 0 2px; padding-left: 9px; border-radius: 2px; background: linear-gradient(#5a98fa, #3c7cee 4px, #3a78ea 22px, #2a60cc); box-shadow: inset 1px 1px #6aa4ff; font: 10px/20px var(--mono); white-space: nowrap; overflow: hidden; }
.quick + .task { margin-left: 8px; }
.desktop { display: flex; align-items: center; gap: 6px; margin-left: auto; color: #a8c8ff; }
.desktop svg { width: 14px; height: 14px; }
.desktop .dots:nth-of-type(2) { margin-right: 4px; }
.tray { display: flex; align-items: center; gap: 2px; width: 149px; height: 30px; margin: 4px 0 0 13px; background: linear-gradient(#1c9cf0, #18a8f4 4px, #1290e8 24px, #0e70c8); box-shadow: inset 1px 0 #0c50a0; }
.tray svg { width: 16px; height: 16px; }
.chev { width: 18px; height: 18px; margin-left: -9px; border: 1px solid #a8e0ff; border-radius: 50%; background: #2a86e8; flex: none; }
.tray time { margin-left: 6px; font: 10px/18px var(--mono); }
```

FILE: chart.js
```js
// Each candle: direction (u = rising, d = falling), wick top, wick bottom, body top, body bottom.
const candles = `
d253,268,260,266 u249,278,261,266 d246,271,259,266 u257,270,265,265 u258,270,263,263 d262,275,265,265 d260,284,265,265 u252,280,267,268
u224,281,231,269 d196,261,232,241 u219,248,224,241 d221,274,222,269 d259,337,271,309 u299,334,309,309 u235,312,244,310 u215,254,230,246
d228,247,231,239 d243,259,246,257 d235,262,258,258 u241,263,244,262 u237,254,241,243 u235,243,237,242 d235,245,238,240 u228,243,229,241
d222,236,230,230 u210,244,228,228 d224,249,225,244 u230,250,237,243 u225,238,235,236 u224,237,227,233 u199,229,206,228 d201,228,208,224
u212,250,216,225 u175,217,209,215 u187,222,191,215 u137,196,159,190 u147,177,158,158 d133,168,157,157 u140,177,150,159 u110,159,134,150
u118,140,130,133 u123,132,128,128 u112,128,123,127 d120,132,125,125 d120,131,123,130 u139,159,143,156 u133,155,135,145 d130,162,133,156
d153,169,157,164 u155,168,164,164 u155,166,158,164 u149,158,152,157 d149,169,153,159 d157,196,159,193 d190,238,194,227 u209,243,224,224
u205,236,221,223 d210,247,219,243 u228,256,234,246 d230,261,235,249 u222,259,233,248 d235,284,237,257 u237,263,250,256 u237,252,240,251
d233,246,238,242 u222,242,228,240 u209,232,217,227 u204,218,210,216 u204,215,209,210 d208,214,208,210 d209,224,213,221 u209,222,214,216
d209,227,214,220 u209,222,215,217 d212,224,216,217 u205,222,207,218 d205,210,205,210 u177,209,186,208 d169,202,187,187 d171,200,187,197
u184,202,193,198 d191,218,193,199 u178,201,191,197 d187,221,191,212 u134,215,155,210 u118,156,142,152 u130,156,137,140 d136,150,136,150
d140,156,149,156 d152,164,152,155 d161,173,161,165 u149,167,150,163 d148,157,149,153 u142,155,149,152 d147,155,150,151 u136,153,147,152
d146,156,146,153 u145,158,153,154 d145,158,151,151 d147,157,151,151 d148,164,150,164 u136,166,139,163 u115,144,133,139 u112,144,121,133
d102,133,123,128 u94,129,126,127 d112,147,126,139 u121,151,133,139 u108,140,121,132 d115,171,120,169 u123,173,133,168 d131,169,131,148
u130,149,143,145 u99,184,104,147 d96,128,105,118 d108,123,116,121 u109,121,111,120 d112,121,112,114 u98,112,101,111 d96,113,102,112
d112,121,113,117 u102,121,102,112 d101,112,101,112`.trim().split(/\s+/);

const NS = "http://www.w3.org/2000/svg";
const group = document.getElementById("candles");
candles.forEach((entry, i) => {
  const [top, bottom, bodyTop, bodyBottom] = entry.slice(1).split(",").map(Number);
  const x = Math.floor(29 + i * 5.42) + 0.5;
  const path = document.createElementNS(NS, "path");
  path.setAttribute("class", "candle " + (entry[0] === "u" ? "up" : "down"));
  // The wick stops at the body, so that rising candles stay hollow.
  path.setAttribute("d", `M${x} ${top}V${bodyTop}M${x} ${bodyBottom}V${bottom}M${x - 1} ${bodyTop + 0.5}H${x + 1}V${bodyBottom + 0.5}H${x - 1}Z`);
  group.appendChild(path);
});
```
